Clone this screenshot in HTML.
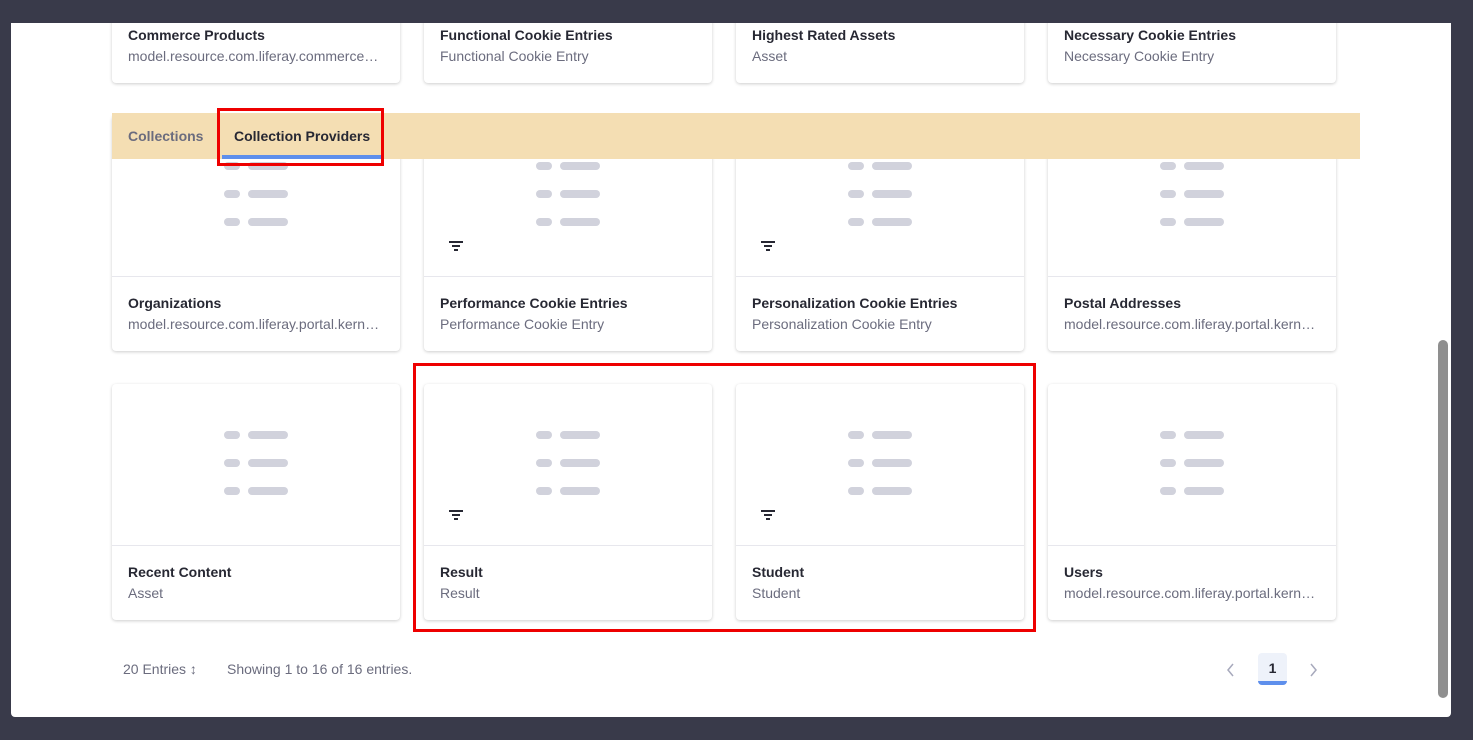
<!DOCTYPE html>
<html><head><style>
*{box-sizing:border-box;margin:0;padding:0}
body{width:1473px;height:740px;background:#393a4a;position:relative;overflow:hidden;font-family:"Liberation Sans",sans-serif}
.modal{position:absolute;left:11px;top:23px;width:1440px;height:694px;background:#fff;overflow:hidden;border-radius:0 0 4px 4px}
.card{position:absolute;width:288px;height:236px;background:#fff;border-radius:4px;box-shadow:0 1px 3px rgba(0,0,0,.2)}
.img{position:absolute;left:0;top:0;width:288px;height:162px;border-bottom:1px solid #e7e7ed}
.pl{position:absolute;left:112px;width:64px;height:8px}
.pl:before{content:"";position:absolute;left:0;top:0;width:16px;height:8px;border-radius:4px;background:#d1d2dc}
.pl:after{content:"";position:absolute;left:24px;top:0;width:40px;height:8px;border-radius:4px;background:#d1d2dc}
.t{position:absolute;left:16px;top:180px;font-size:14px;font-weight:bold;color:#272833}
.s{position:absolute;left:16px;top:201px;font-size:14px;color:#6b6c7e;white-space:nowrap;width:254px;overflow:hidden;text-overflow:ellipsis}
.f{position:absolute;left:25px;top:126px}
.tabs{position:absolute;left:101px;top:90px;width:1248px;height:46px;background:#f4deb3}
</style></head><body>
<div class="modal">
<div id="c"></div>
</div>
<script>
var data=[
["Commerce Products","model.resource.com.liferay.commerce.product.model",0],
["Functional Cookie Entries","Functional Cookie Entry",1],
["Highest Rated Assets","Asset",0],
["Necessary Cookie Entries","Necessary Cookie Entry",1],
["Organizations","model.resource.com.liferay.portal.kernel.model.Organization",0],
["Performance Cookie Entries","Performance Cookie Entry",1],
["Personalization Cookie Entries","Personalization Cookie Entry",1],
["Postal Addresses","model.resource.com.liferay.portal.kernel.model.Address",0],
["Recent Content","Asset",0],
["Result","Result",1],
["Student","Student",1],
["Users","model.resource.com.liferay.portal.kernel.model.User",0]];
var h="",tops=[-176,92,361];
data.forEach(function(d,i){var l=101+(i%4)*312,t=tops[Math.floor(i/4)];
h+='<div class="card" style="left:'+l+'px;top:'+t+'px"><div class="img"><div class="pl" style="top:47px"></div><div class="pl" style="top:75px"></div><div class="pl" style="top:103px"></div>'+(d[2]&&i!=1&&i!=3?'<svg class="f" width="14" height="10"><rect x="0" y="0" width="14" height="2" fill="#272833"/><rect x="3" y="4" width="8" height="2" fill="#272833"/><rect x="5" y="8" width="4" height="2" fill="#272833"/></svg>':'')+'</div><div class="t">'+d[0]+'</div><div class="s">'+d[1]+'</div></div>';});
h+='<div class="tabs"><span style="position:absolute;left:16px;top:15px;font-size:14px;font-weight:bold;color:#6b6c7e">Collections</span><span style="position:absolute;left:122px;top:15px;font-size:14px;font-weight:bold;color:#272833">Collection Providers</span><div style="position:absolute;left:110px;top:42px;width:160px;height:4px;background:#5e8fec"></div></div>';
h+='<div style="position:absolute;left:206px;top:85px;width:167px;height:58px;border:3px solid #e00"></div>';
h+='<div style="position:absolute;left:402px;top:340px;width:623px;height:269px;border:3px solid #e00"></div>';
h+='<div style="position:absolute;left:112px;top:638px;font-size:14px;color:#6b6c7e">20 Entries &#x2195;</div>';
h+='<div style="position:absolute;left:216px;top:638px;font-size:14px;color:#6b6c7e">Showing 1 to 16 of 16 entries.</div>';
h+='<svg style="position:absolute;left:1216px;top:640px" width="8" height="14"><path d="M6 1L1 7L6 13" fill="none" stroke="#a7a9bc" stroke-width="1.5"/></svg>';
h+='<div style="position:absolute;left:1247px;top:630px;width:29px;height:32px;background:#eef2fa;border-radius:4px;border-bottom:4px solid #5e8fec;text-align:center;line-height:30px;font-size:14px;font-weight:bold;color:#272833">1</div>';
h+='<svg style="position:absolute;left:1298px;top:640px" width="8" height="14"><path d="M2 1L7 7L2 13" fill="none" stroke="#a7a9bc" stroke-width="1.5"/></svg>';
h+='<div style="position:absolute;left:1427px;top:317px;width:10px;height:358px;background:#8f8f8f;border-radius:5px"></div>';
document.getElementById("c").innerHTML=h;
</script>
</body></html>
